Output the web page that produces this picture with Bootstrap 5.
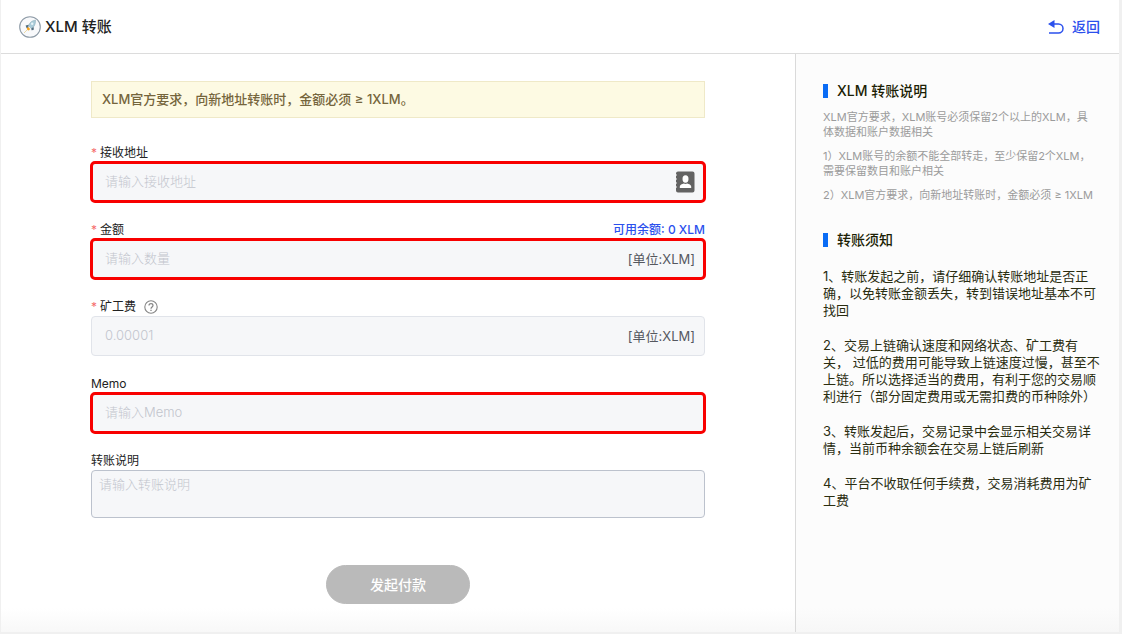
<!DOCTYPE html>
<html lang="zh-CN">
<head>
<meta charset="utf-8">
<meta name="viewport" content="width=device-width, initial-scale=1">
<title>XLM 转账</title>
<link href="https://cdn.jsdelivr.net/npm/bootstrap@5.3.0/dist/css/bootstrap.min.css" rel="stylesheet">
<style>
body{font-family:Inter,"Noto Sans CJK SC",sans-serif;font-size:13px;color:#222;background:#f0f0f0;padding:0 3px 2px 1px}
.page-head{height:54px;padding:0 19px 0 18px;border-bottom:1px solid #dcdcdc}
.page-title{font-size:15px;line-height:22px;font-weight:500;color:#222}
.back-link{font-size:14px;line-height:20px;font-weight:500;color:#2b50ed}
.form-side{padding:27px 90px 20px;background:linear-gradient(to top,#f8f8f8,#fff 24px)}
.notice{height:37px;padding:0 10px;margin-bottom:26px;border:1px solid #efe9c8;background:#fdfae3;color:#75653c;font-weight:500}
.field{margin-bottom:19px}
.field-head{height:18px;font-size:12px;line-height:18px}
.req::before{content:"*";color:#f56c6c;margin-right:3px}
.balance{color:#2b50ed;font-weight:500}
.box{height:40px;border:1px solid #e1e4ea;border-radius:4px;background:#f6f7f9;padding:0 9px 0 13px}
.box-hot{outline:3px solid #f80000;outline-offset:-2px}
.box input,.memo-area{font-size:13px;line-height:20px;color:#444}
.box input{padding:0 0 2px;background:none!important}
.box input::placeholder,.memo-area::placeholder{color:#c2c5cd;opacity:1;font-weight:300}
.unit{color:#55585f;padding-top:2px}
.memo-area{height:48px;padding:3px 7px;border:1px solid #bcc2cd;border-radius:4px;background:#f6f7f9;resize:none}
.pay{width:144px;height:39px;margin-top:47px;font-size:14px;font-weight:500;line-height:20px;padding:0}
.pay:disabled{background:#bababa;border-color:#bababa;color:#fff;opacity:1}
.help-side{flex:0 0 324px;padding:27px 18px 20px 27px;border-left:1px solid #dadada;background:linear-gradient(to top,#f7f7f7,#fcfcfc 24px)}
.help-title{font-size:14px;line-height:20px;font-weight:500;color:#1c1f05;margin:0}
.help-title::before{content:"";width:5px;height:14px;background:#0a6cf5;margin-right:9px}
.tips{padding:9px 4px 18px 0}
.tips p{font-size:11px;line-height:15px;color:#9b9b9b;margin-bottom:9px}
.rules{padding-top:18px}
.rules p{line-height:17px;color:#2a2d10;margin-bottom:18px}
</style>
</head>
<body class="d-flex flex-column min-vh-100">
<header class="page-head bg-white d-flex align-items-center justify-content-between">
  <div class="d-flex align-items-center gap-1">
    <svg width="22" height="22" viewBox="0 0 22 22" aria-hidden="true">
      <circle cx="11" cy="11" r="10.3" fill="#f8f9fb" stroke="#8d9aa6" stroke-width="1.1"/>
      <path d="M5 17l3-3" stroke="#ead9a5" stroke-width="1"/>
      <path d="M16.5 4.2c-3.4.3-5.6 2-7 5.400l2.800 3c2.900-1.600 4.300-4.200 4.200-8.400z" fill="#a9cbd9" stroke="#8bacba" stroke-width=".6"/>
      <path d="M9.600 8.800l-3 .8 1 2.600 1.700-.5zM12.500 12l2.400-.8-.3 2.900-2.200.1z" fill="#536e80"/>
      <circle cx="13.200" cy="7.800" r="1.200" fill="#e8f5fa"/>
      <path d="M9.100 10.900l2.100 2-1.300 1.700-1.600-.5-.4-1.800z" fill="#f9a51e"/>
    </svg>
    <h1 class="page-title m-0">XLM 转账</h1>
  </div>
  <a href="#" class="back-link d-flex align-items-center gap-2 text-decoration-none">
    <svg width="16" height="14" viewBox="0 0 16 14" fill="none" aria-hidden="true">
      <path d="M4 4h6.500a4.500 4.500 0 0 1 0 9H1" stroke="currentColor" stroke-width="1.500"/>
      <path d="M6.500 0v8L0 4z" fill="currentColor"/>
    </svg>
    返回
  </a>
</header>
<main class="d-flex flex-grow-1">
  <form class="form-side flex-grow-1">
    <div class="notice d-flex align-items-center">XLM官方要求，向新地址转账时，金额必须 ≥ 1XLM。</div>
    <div class="field">
      <div class="field-head d-flex"><label class="req" for="addr">接收地址</label></div>
      <div class="box box-hot d-flex align-items-center">
        <input id="addr" type="text" class="form-control border-0 shadow-none" placeholder="请输入接收地址">
        <svg width="20" height="22" viewBox="0 0 20 22" class="flex-shrink-0" aria-hidden="true">
          <path d="M3 .5h14.500a2 2 0 0 1 2 2v17a2 2 0 0 1-2 2H3a2 2 0 0 1-2-2v-3h1v-1H1v-3h1v-1H1v-3h1v-1H1v-3h1v-1H1v-1a2 2 0 0 1 2-2z" fill="#636363"/>
          <ellipse cx="10.500" cy="8" rx="3" ry="3.700" fill="#fff"/>
          <path d="M4.800 17v-1.400c0-1.700 2.200-2.800 4-3.200l1.700.5 1.700-.5c1.800.4 4 1.500 4 3.200V17z" fill="#fff"/>
        </svg>
      </div>
    </div>
    <div class="field">
      <div class="field-head d-flex justify-content-between"><label class="req" for="amount">金额</label><span class="balance">可用余额: 0 XLM</span></div>
      <div class="box box-hot d-flex align-items-center">
        <input id="amount" type="text" class="form-control border-0 shadow-none" placeholder="请输入数量">
        <span class="unit text-nowrap">[单位:XLM]</span>
      </div>
    </div>
    <div class="field">
      <div class="field-head d-flex align-items-center">
        <label class="req" for="fee">矿工费</label>
        <svg class="ms-2" width="14" height="14" viewBox="0 0 14 14" fill="none" stroke="#858585" aria-hidden="true">
          <circle cx="7" cy="7" r="6.200" stroke-width="1.100"/>
          <path d="M5 5.600c0-2.800 4-2.600 4-.2C9 6.900 7 7 7 8.700" stroke-width="1.200"/>
          <path d="M7 9.700v1.300" stroke-width="1.300"/>
        </svg>
      </div>
      <div class="box d-flex align-items-center">
        <input id="fee" type="text" class="form-control border-0 shadow-none" placeholder="0.00001" disabled>
        <span class="unit text-nowrap">[单位:XLM]</span>
      </div>
    </div>
    <div class="field">
      <div class="field-head d-flex"><label for="memo">Memo</label></div>
      <div class="box box-hot d-flex align-items-center">
        <input id="memo" type="text" class="form-control border-0 shadow-none" placeholder="请输入Memo">
      </div>
    </div>
    <div>
      <div class="field-head d-flex"><label for="remark">转账说明</label></div>
      <textarea id="remark" class="memo-area form-control shadow-none" placeholder="请输入转账说明"></textarea>
    </div>
    <div class="text-center">
      <button type="submit" class="pay btn rounded-pill" disabled>发起付款</button>
    </div>
  </form>
  <aside class="help-side">
    <h2 class="help-title d-flex align-items-center">XLM 转账说明</h2>
    <div class="tips">
      <p>XLM官方要求，XLM账号必须保留2个以上的XLM，具体数据和账户数据相关</p>
      <p>1）XLM账号的余额不能全部转走，至少保留2个XLM，需要保留数目和账户相关</p>
      <p>2）XLM官方要求，向新地址转账时，金额必须 ≥ 1XLM</p>
    </div>
    <h2 class="help-title d-flex align-items-center">转账须知</h2>
    <div class="rules">
      <p>1、转账发起之前，请仔细确认转账地址是否正确，以免转账金额丢失，转到错误地址基本不可找回</p>
      <p>2、交易上链确认速度和网络状态、矿工费有关， 过低的费用可能导致上链速度过慢，甚至不上链。所以选择适当的费用，有利于您的交易顺利进行（部分固定费用或无需扣费的币种除外）</p>
      <p>3、转账发起后，交易记录中会显示相关交易详情，当前币种余额会在交易上链后刷新</p>
      <p>4、平台不收取任何手续费，交易消耗费用为矿工费</p>
    </div>
  </aside>
</main>
<script src="https://cdn.jsdelivr.net/npm/bootstrap@5.3.0/dist/js/bootstrap.bundle.min.js"></script>
</body>
</html>
